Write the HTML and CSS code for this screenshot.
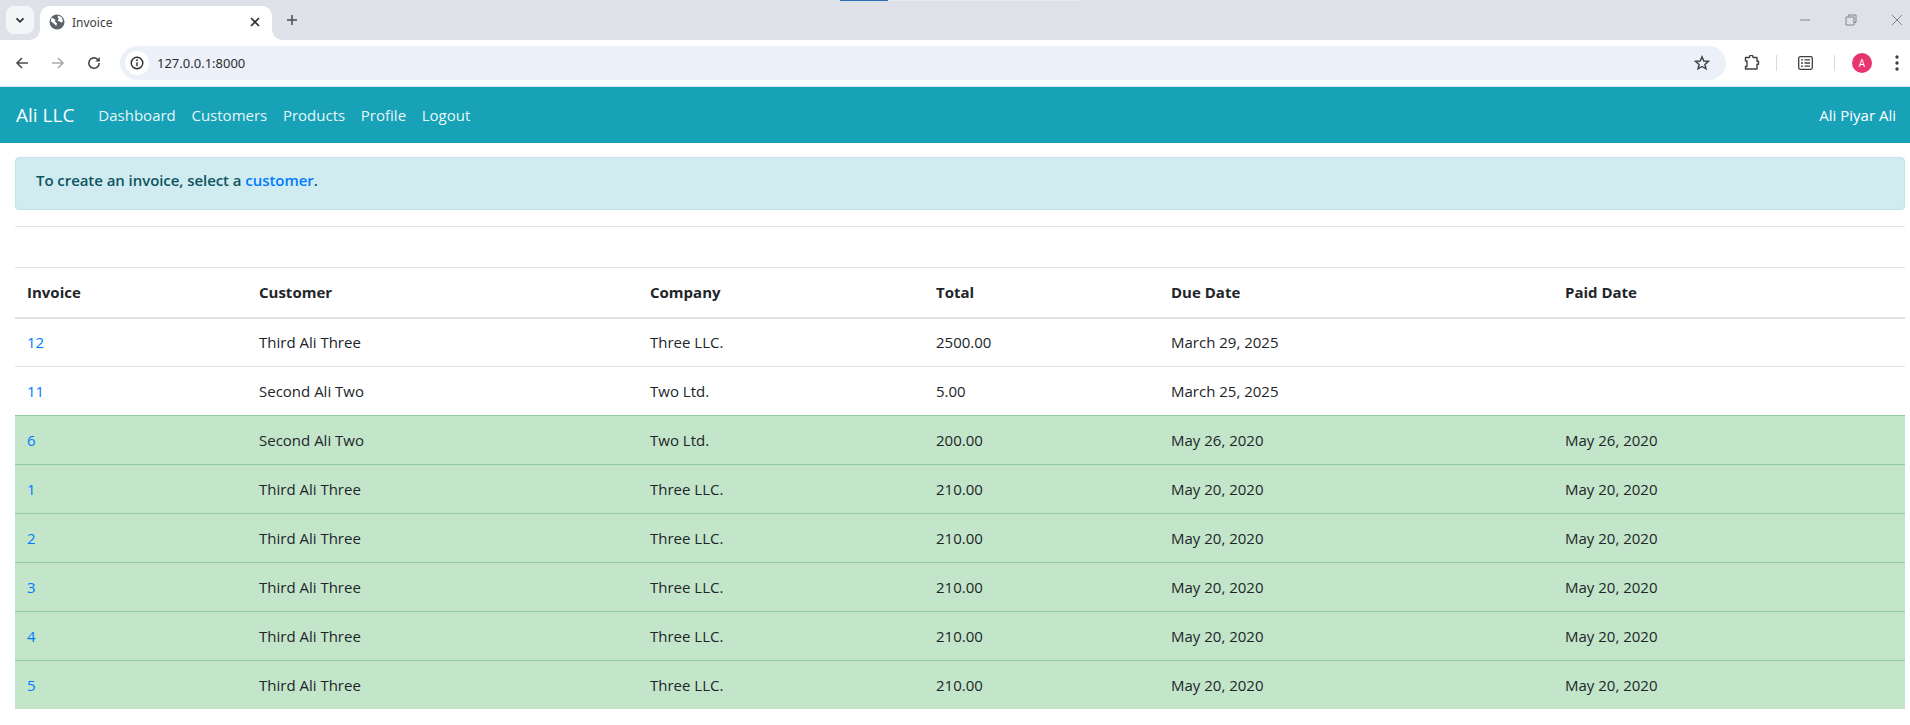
FILE: index.html
```html
<!DOCTYPE html>
<html lang="en">
<head>
    <meta charset="UTF-8">
    <meta name="viewport" content="width=device-width, initial-scale=1.0">
    <title>Invoice</title>
    <link rel="stylesheet" href="styles.css">
</head>
<body>
    <div class="tabbar">
        <div class="load-strip"><span class="load-blue"></span><span class="load-faint"></span></div>
        <div class="tab-search">
            <svg width="12" height="12" viewBox="0 0 12 12"><path d="M2.5 4.3 6 7.8l3.5-3.5" fill="none" stroke="#2b2d30" stroke-width="1.7"/></svg>
        </div>
        <div class="tab">
            <svg class="favicon" width="16" height="16" viewBox="0 0 16 16">
                <circle cx="8" cy="8" r="7.5" fill="#5f6368"/>
                <path d="M2.8 3.6 6.4 5.800 6 7.400 8 9.400 7.200 12 5.400 10 1.800 7.200A6.400 6.400 0 0 1 2.800 3.600ZM9.200 1.400 12.800 3.200 14 7 12.600 8.800 10.600 7.400 8.600 6.800 9.800 4.800 8.600 3.200Z" fill="#fff"/>
            </svg>
            <span class="tab-title">Invoice</span>
            <svg class="tab-close" width="10" height="10" viewBox="0 0 10 10"><path d="M1 1l8 8M9 1 1 9" stroke="#2b2d30" stroke-width="1.6"/></svg>
        </div>
        <svg class="new-tab" width="12" height="12" viewBox="0 0 12 12"><path d="M6 1v10M1 6h10" stroke="#4a4d51" stroke-width="1.5"/></svg>
        <div class="window-controls">
            <svg width="12" height="12" viewBox="0 0 12 12"><path d="M1 6h10" stroke="#80858c" stroke-width="1"/></svg>
            <svg width="12" height="12" viewBox="0 0 12 12"><path d="M3.5 2.5V1h7.5v7.5H9M1 3h8v8H1Z" fill="none" stroke="#80858c" stroke-width="1"/></svg>
            <svg width="12" height="12" viewBox="0 0 12 12"><path d="M1 1l10 10M11 1 1 11" stroke="#80858c" stroke-width="1"/></svg>
        </div>
    </div>

    <div class="toolbar">
        <svg class="tool" width="16" height="16" viewBox="0 0 16 16"><path d="M14 8H3M8 3 3 8l5 5" fill="none" stroke="#4a4d51" stroke-width="1.6"/></svg>
        <svg class="tool" width="16" height="16" viewBox="0 0 16 16"><path d="M2 8h11M8 3l5 5-5 5" fill="none" stroke="#a8abaf" stroke-width="1.6"/></svg>
        <svg class="tool" width="16" height="16" viewBox="0 0 16 16"><path d="M13.2 8A5.2 5.2 0 1 1 11.6 4.3L13.4 6" fill="none" stroke="#4a4d51" stroke-width="1.6"/><path d="M13.8 2v4.6H9.2Z" fill="#4a4d51"/></svg>
        <div class="omnibox">
            <span class="site-info">
                <svg width="14" height="14" viewBox="0 0 14 14"><circle cx="7" cy="7" r="5.8" fill="none" stroke="#2b2d30" stroke-width="1.4"/><path d="M7 6.2v4" stroke="#2b2d30" stroke-width="1.4"/><circle cx="7" cy="4.2" r=".9" fill="#2b2d30"/></svg>
            </span>
            <span class="url">127.0.0.1:8000</span>
            <svg class="star" width="16" height="16" viewBox="0 0 16 16"><path d="M8 1.8 9.8 6l4.6.4-3.5 3 1.1 4.500L8 11.500l-4 2.400 1.100-4.500-3.500-3L6.200 6Z" fill="none" stroke="#3c4043" stroke-width="1.4"/></svg>
        </div>
        <div class="toolbar-right">
            <svg width="16" height="16" viewBox="0 0 16 16"><path d="M1.500 2.500H5.500V2A1.700 1.700 0 0 1 9 2v.5h4v3.700h1.500v3H13V14H1.500V11.500H3V6H1.500Z" fill="none" stroke="#3c4043" stroke-width="1.400" stroke-linejoin="round"/></svg>
            <span class="divider"></span>
            <svg width="15" height="14" viewBox="0 0 15 14"><rect x=".7" y=".7" width="13.600" height="12.600" rx="1.500" fill="none" stroke="#3c4043" stroke-width="1.300"/><path d="M3 3.800h2M3 7h2M3 10.200h2M6.500 3.800H12M6.500 7H12M6.500 10.200H12" stroke="#3c4043" stroke-width="1.300"/></svg>
            <span class="divider"></span>
            <span class="avatar">A</span>
            <svg width="4" height="16" viewBox="0 0 4 16"><circle cx="2" cy="2" r="1.700" fill="#3c4043"/><circle cx="2" cy="8" r="1.700" fill="#3c4043"/><circle cx="2" cy="14" r="1.700" fill="#3c4043"/></svg>
        </div>
    </div>

    <nav class="navbar">
        <a class="brand" href="#">Ali LLC</a>
        <a class="nav-link" href="#">Dashboard</a>
        <a class="nav-link" href="#">Customers</a>
        <a class="nav-link" href="#">Products</a>
        <a class="nav-link" href="#">Profile</a>
        <a class="nav-link" href="#">Logout</a>
        <span class="nav-user">Ali Piyar Ali</span>
    </nav>

    <main class="content">
        <div class="alert">To create an invoice, select a <a href="#">customer</a>.</div>
        <hr class="rule">

        <table class="invoices">
            <colgroup>
                <col class="col-invoice">
                <col class="col-customer">
                <col class="col-company">
                <col class="col-total">
                <col class="col-due">
                <col class="col-paid">
            </colgroup>
            <thead>
                <tr><th>Invoice</th><th>Customer</th><th>Company</th><th>Total</th><th>Due Date</th><th>Paid Date</th></tr>
            </thead>
            <tbody>
                <tr><td><a href="#">12</a></td><td>Third Ali Three</td><td>Three LLC.</td><td>2500.00</td><td>March 29, 2025</td><td></td></tr>
                <tr><td><a href="#">11</a></td><td>Second Ali Two</td><td>Two Ltd.</td><td>5.00</td><td>March 25, 2025</td><td></td></tr>
                <tr class="paid"><td><a href="#">6</a></td><td>Second Ali Two</td><td>Two Ltd.</td><td>200.00</td><td>May 26, 2020</td><td>May 26, 2020</td></tr>
                <tr class="paid"><td><a href="#">1</a></td><td>Third Ali Three</td><td>Three LLC.</td><td>210.00</td><td>May 20, 2020</td><td>May 20, 2020</td></tr>
                <tr class="paid"><td><a href="#">2</a></td><td>Third Ali Three</td><td>Three LLC.</td><td>210.00</td><td>May 20, 2020</td><td>May 20, 2020</td></tr>
                <tr class="paid"><td><a href="#">3</a></td><td>Third Ali Three</td><td>Three LLC.</td><td>210.00</td><td>May 20, 2020</td><td>May 20, 2020</td></tr>
                <tr class="paid"><td><a href="#">4</a></td><td>Third Ali Three</td><td>Three LLC.</td><td>210.00</td><td>May 20, 2020</td><td>May 20, 2020</td></tr>
                <tr class="paid"><td><a href="#">5</a></td><td>Third Ali Three</td><td>Three LLC.</td><td>210.00</td><td>May 20, 2020</td><td>May 20, 2020</td></tr>
            </tbody>
        </table>
    </main>
</body>
</html>
```

FILE: styles.css
```css
* {
    box-sizing: border-box;
}
html, body {
    overflow: hidden;
}
body {
    margin: 0;
    height: 725px;
    font-family: "Open Sans", "Noto Sans", Arial, sans-serif;
    font-size: 15px;
    color: #212529;
    background-color: #fff;
}
a {
    text-decoration: none;
}

/* browser chrome */
.tabbar {
    position: relative;
    display: flex;
    align-items: flex-end;
    height: 40px;
    padding-left: 6px;
    background-color: #dee1e7;
}
.load-strip {
    position: absolute;
    top: 0;
    left: 840px;
    display: flex;
    height: 1px;
}
.load-blue {
    width: 48px;
    background-color: #2a6fb5;
}
.load-faint {
    width: 192px;
    background-color: #e8eaec;
}
.tab-search {
    display: flex;
    align-items: center;
    justify-content: center;
    align-self: flex-start;
    width: 28px;
    height: 28px;
    margin-top: 6px;
    border-radius: 8px;
    background-color: #f4f5f7;
}
.tab {
    position: relative;
    display: flex;
    align-items: center;
    width: 232px;
    height: 34px;
    margin-left: 6px;
    padding: 0 12px 2px 9px;
    border-radius: 10px 10px 0 0;
    background-color: #fff;
}
/* the small outward curves at the foot of the active tab */
.tab::before,
.tab::after {
    content: "";
    position: absolute;
    bottom: 0;
    width: 10px;
    height: 10px;
}
.tab::before {
    left: -10px;
    background: radial-gradient(circle at 0 0, transparent 9.500px, #fff 10px);
}
.tab::after {
    right: -10px;
    background: radial-gradient(circle at 100% 0, transparent 9.500px, #fff 10px);
}
.tab-title {
    flex: 1;
    margin-left: 7px;
    font-family: "Noto Sans", Arial, sans-serif;
    font-size: 12px;
    color: #3c4043;
}
.new-tab {
    align-self: center;
    margin-left: 14px;
}
.window-controls {
    display: flex;
    align-self: flex-start;
    gap: 34px;
    margin: 14px 7px 0 auto;
}
.toolbar {
    display: flex;
    align-items: center;
    height: 46px;
    padding: 0 11px 0 14px;
    border-radius: 10px 0 0 0;
    background-color: #fff;
}
.tool {
    margin-right: 20px;
}
.tool:nth-child(3) {
    margin-right: 18px;
}
.omnibox {
    display: flex;
    flex: 1;
    align-items: center;
    height: 34px;
    padding: 0 16px 0 5px;
    border-radius: 17px;
    background-color: #ecf1f9;
}
.site-info {
    display: flex;
    align-items: center;
    justify-content: center;
    width: 24px;
    height: 24px;
    border-radius: 50%;
    background-color: #fff;
}
.url {
    flex: 1;
    margin-left: 8px;
    font-family: "Noto Sans", Arial, sans-serif;
    font-size: 13px;
    color: #2b2d30;
}
.toolbar-right {
    display: flex;
    align-items: center;
    margin-left: 18px;
}
.divider {
    width: 1px;
    height: 16px;
    margin: 0 21px 0 16px;
    background-color: #cfdcee;
}
.divider:nth-of-type(2) {
    margin: 0 17px 0 21px;
}
.avatar {
    width: 20px;
    height: 20px;
    margin-right: 23px;
    border-radius: 50%;
    background-color: #e8356f;
    font-size: 10px;
    line-height: 20px;
    text-align: center;
    color: #fff;
}

/* navbar */
.navbar {
    display: flex;
    align-items: center;
    height: 57px;
    padding: 0 14px 0 16px;
    border-top: 1px solid #d9e6ec;
    background-color: #17a2b8;
    font-size: 15px;
}
.brand {
    margin-right: 24px;
    font-size: 19px;
    color: #fff;
}
.nav-link {
    margin-right: 15.700px;
    color: rgba(255, 255, 255, 0.92);
}
.nav-user {
    margin-left: auto;
    color: #fff;
}

/* page */
.content {
    padding: 14px 5px 0 15px;
}
.alert {
    height: 53px;
    padding: 12px 20px;
    border: 1px solid #bee5eb;
    border-radius: 4px;
    background-color: #d1ecf1;
    font-weight: 600;
    letter-spacing: -0.06px;
    color: #0c5460;
}
.alert a {
    color: #007bff;
}
.rule {
    height: 1px;
    margin: 16px 0 40px;
    border: 0;
    background-color: #e5e5e5;
}
.invoices {
    width: 100%;
    border-collapse: collapse;
    table-layout: fixed;
}
.col-invoice { width: 232px; }
.col-customer { width: 391px; }
.col-company { width: 286px; }
.col-total { width: 235px; }
.col-due { width: 394px; }
.invoices th,
.invoices td {
    height: 49px;
    padding: 0 12px;
    border-top: 1px solid #dee2e6;
    text-align: left;
    vertical-align: middle;
}
.invoices th {
    height: 50px;
    border-bottom: 2px solid #dee2e6;
    font-weight: 700;
    color: #212529;
}
.invoices tr:last-child td {
    height: 48px;
}
.invoices td a {
    color: #007bff;
}
.paid td {
    border-top-color: #8fcaa0;
    background-color: #c3e6cb;
}
```
